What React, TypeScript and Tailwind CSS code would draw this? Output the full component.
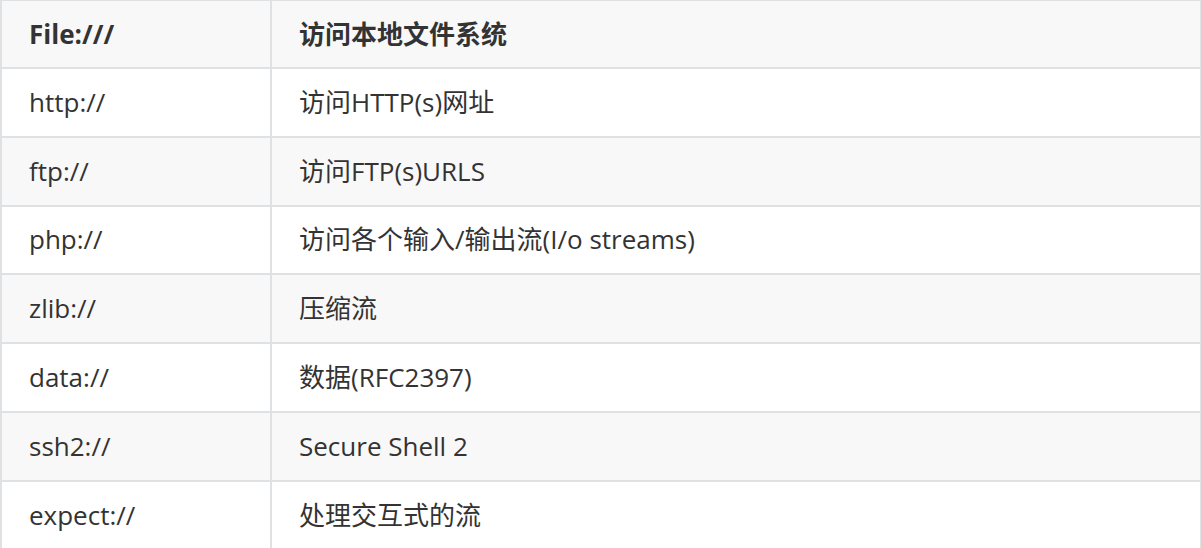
const rows: [string, string][] = [
  ["http://", "访问HTTP(s)网址"],
  ["ftp://", "访问FTP(s)URLS"],
  ["php://", "访问各个输入/输出流(I/o streams)"],
  ["zlib://", "压缩流"],
  ["data://", "数据(RFC2397)"],
  ["ssh2://", "Secure Shell 2"],
  ["expect://", "处理交互式的流"],
];

const Cell = ({ children, shade, head }: { children: React.ReactNode; shade?: boolean; head?: boolean }) => (
  <div
    className={`flex items-center pl-[27px] ${head ? "h-[66px] font-bold" : "h-[66.8px]"} ${
      shade ? "bg-[#f8f8f8]" : "bg-white"
    }`}
  >
    {children}
  </div>
);

export default function App() {
  return (
    <div
      className="w-[1201px] h-[548px] overflow-hidden bg-white text-[26px] text-[#333333]"
      style={{ fontFamily: '"Open Sans", "Noto Sans CJK SC", sans-serif' }}
    >
      <div className="grid grid-cols-[268px_1fr] gap-[2px] bg-[#dfe2e5] pl-[2px] pr-[1px] pt-[1px]">
        <Cell head shade>File:///</Cell>
        <Cell head shade>访问本地文件系统</Cell>
        {rows.map(([a, b], i) => (
          <>
            <Cell key={a} shade={i % 2 === 1}>{a}</Cell>
            <Cell key={b} shade={i % 2 === 1}>{b}</Cell>
          </>
        ))}
      </div>
    </div>
  );
}
